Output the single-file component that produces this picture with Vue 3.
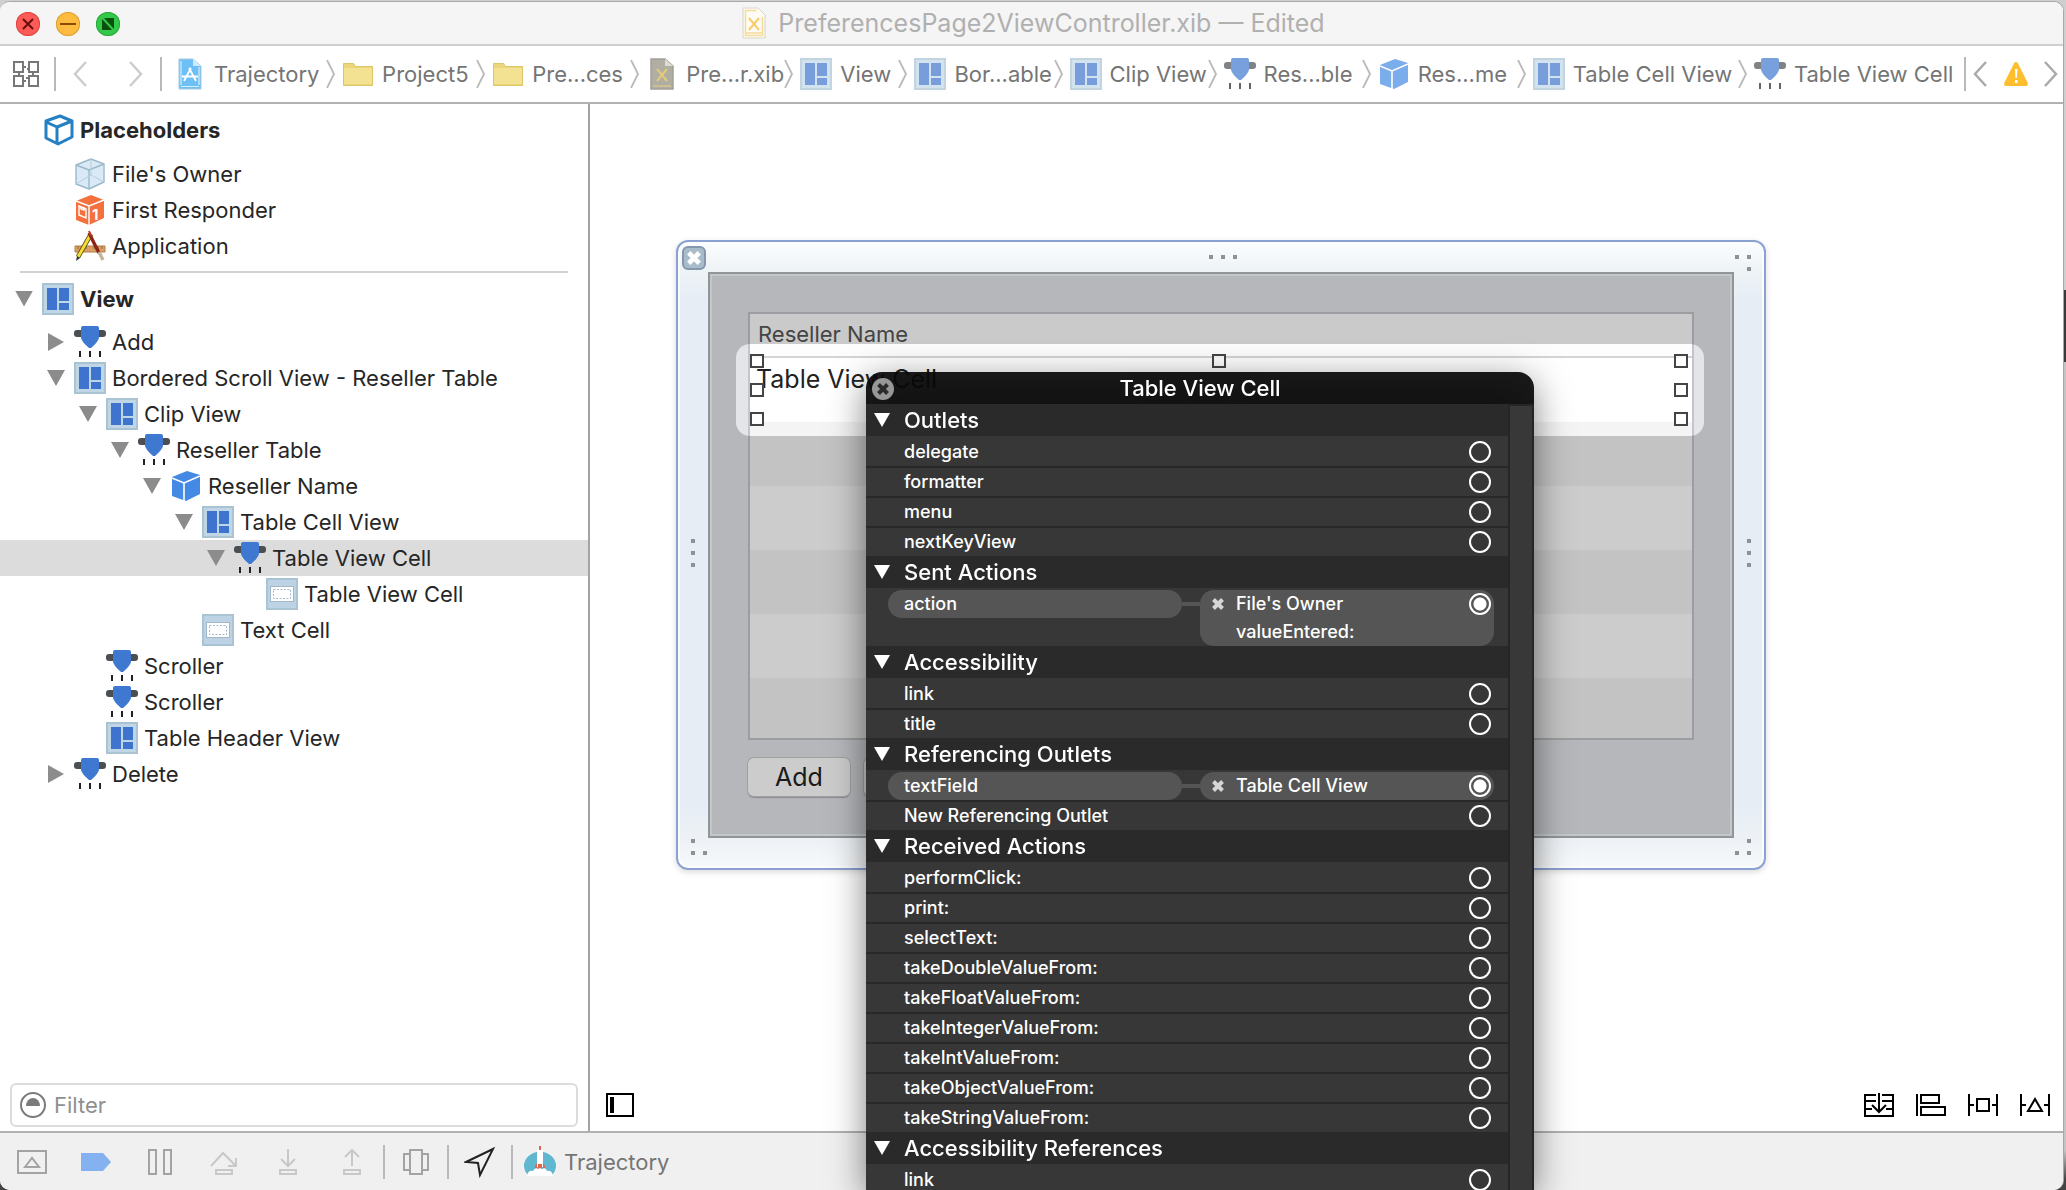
<script setup>
import { ref } from 'vue'

const crumbs = [
  { icon: 'project', label: 'Trajectory' },
  { icon: 'folder', label: 'Project5' },
  { icon: 'folder', label: 'Pre...ces' },
  { icon: 'xib-dim', label: 'Pre...r.xib' },
  { icon: 'view', label: 'View' },
  { icon: 'view', label: 'Bor...able' },
  { icon: 'view', label: 'Clip View' },
  { icon: 'control', label: 'Res...ble' },
  { icon: 'cube', label: 'Res...me' },
  { icon: 'view', label: 'Table Cell View' },
  { icon: 'control', label: 'Table View Cell' },
]

const placeholders = [
  { icon: 'owner', label: "File's Owner" },
  { icon: 'responder', label: 'First Responder' },
  { icon: 'app', label: 'Application' },
]

const tree = [
  { level: 1, icon: 'control', label: 'Add', state: 'closed' },
  { level: 1, icon: 'view', label: 'Bordered Scroll View - Reseller Table', state: 'open' },
  { level: 2, icon: 'view', label: 'Clip View', state: 'open' },
  { level: 3, icon: 'control', label: 'Reseller Table', state: 'open' },
  { level: 4, icon: 'cube', label: 'Reseller Name', state: 'open' },
  { level: 5, icon: 'view', label: 'Table Cell View', state: 'open' },
  { level: 6, icon: 'control', label: 'Table View Cell', state: 'open' },
  { level: 7, icon: 'cell', label: 'Table View Cell' },
  { level: 5, icon: 'cell', label: 'Text Cell' },
  { level: 2, icon: 'control', label: 'Scroller' },
  { level: 2, icon: 'control', label: 'Scroller' },
  { level: 2, icon: 'view', label: 'Table Header View' },
  { level: 1, icon: 'control', label: 'Delete', state: 'closed' },
]
const selected = ref(6)
const filter = ref('')

const sections = [
  { title: 'Outlets', rows: [{ name: 'delegate' }, { name: 'formatter' }, { name: 'menu' }, { name: 'nextKeyView' }] },
  { title: 'Sent Actions', rows: [{ name: 'action', target: ["File's Owner", 'valueEntered:'] }] },
  { title: 'Accessibility', rows: [{ name: 'link' }, { name: 'title' }] },
  { title: 'Referencing Outlets', rows: [{ name: 'textField', target: ['Table Cell View'] }, { name: 'New Referencing Outlet' }] },
  {
    title: 'Received Actions',
    rows: [
      { name: 'performClick:' }, { name: 'print:' }, { name: 'selectText:' },
      { name: 'takeDoubleValueFrom:' }, { name: 'takeFloatValueFrom:' }, { name: 'takeIntegerValueFrom:' },
      { name: 'takeIntValueFrom:' }, { name: 'takeObjectValueFrom:' }, { name: 'takeStringValueFrom:' },
    ],
  },
  { title: 'Accessibility References', rows: [{ name: 'link' }] },
]

const debugTools = [
  { icon: 'd-toggle', label: 'Hide debug area' },
  { icon: 'd-break', label: 'Breakpoints' },
  { icon: 'd-pause', label: 'Pause' },
  { icon: 'd-over', label: 'Step over' },
  { icon: 'd-into', label: 'Step into' },
  { icon: 'd-out', label: 'Step out' },
]
const layoutTools = [
  { icon: 'l-embed', label: 'Embed in stack' },
  { icon: 'l-align', label: 'Align' },
  { icon: 'l-pin', label: 'Pin' },
  { icon: 'l-resolve', label: 'Resolve layout issues' },
]
</script>

<template>
  <svg class="defs" aria-hidden="true">
    <symbol id="i-view" viewBox="0 0 32 32">
      <rect x="1" y="1" width="30" height="30" fill="#bfd6e7" stroke="#a9c3d3" stroke-width="2" />
      <path fill="#3e74cd" d="M5 5h10v22H5zM17 5h10v13H17zM17 20h10v7H17z" />
    </symbol>
    <symbol id="i-control" viewBox="0 0 32 32">
      <rect y="4" width="32" height="7" rx="3" fill="#4b4f54" />
      <path fill="#3e78d0" d="M9 0h14q2 0 2 2v10q-1 4-8 10h-2q-7-6-8-10V2q0-2 2-2z" />
      <path fill="#222" d="M5 25h2v6H5zM15 25h2v6h-2zM25 25h2v6h-2z" />
    </symbol>
    <symbol id="i-cube" viewBox="0 0 32 32">
      <path fill="#4489e4" d="M17 1l13 4v19l-14 7L2 26V7z" />
      <path fill="none" stroke="#fff" stroke-width="1.6" d="M2 8l12 5 16-7M14 13v18" />
    </symbol>
    <symbol id="i-cube-line" viewBox="0 0 32 32">
      <path fill="#fff" stroke="#2580c3" stroke-width="3" stroke-linejoin="round" d="M18 2l12 5v16l-14 7L4 24V7zM4 8l11 5 15-6M15 13v17" />
    </symbol>
    <symbol id="i-owner" viewBox="0 0 32 32">
      <path fill="#d9e9f5" stroke="#9ab9c9" stroke-width="1.4" stroke-linejoin="round" d="M17 1l13 5v18l-15 7L2 26V7z" />
      <path fill="none" stroke="#9ab9c9" stroke-width="1.4" d="M2 7l13 5 15-6M15 12v19" />
      <path fill="none" stroke="#b6cfdd" d="M17 1v16l13 7M17 17L2 26" />
    </symbol>
    <symbol id="i-responder" viewBox="0 0 32 32">
      <path fill="#f4703c" d="M17 1l13 5v18l-15 7L2 26V7z" />
      <path fill="none" stroke="#fff" stroke-width="1.4" d="M2 7l13 5 15-6M15 12v19M5 12l7 3v9l-7-3zM7 12v3l3 1v-3" />
      <text x="18" y="26" fill="#fff" font-size="15" font-weight="700" font-family="Inter, sans-serif">1</text>
    </symbol>
    <symbol id="i-app" viewBox="0 0 32 32">
      <path fill="#d9a066" stroke="#b57f48" d="M1 16h30v6H1z" />
      <path stroke="#9a6a38" d="M4 16v3M8 16v3M12 16v3M20 16v3M24 16v3M28 16v3" />
      <path stroke="#5b4a10" stroke-width="4.6" d="M17 4L4 27" />
      <path stroke="#f2dd3a" stroke-width="3" d="M17 4L4 27" />
      <path fill="#333" d="M2 31l1-5 3 2z" />
      <path stroke="#8c2517" stroke-width="3.4" d="M15 3l10 20" />
      <path stroke="#c9b49b" stroke-width="3.4" d="M25 22l4 8" />
      <path stroke="#c0392b" stroke-width="2" d="M15 1l2 5" />
    </symbol>
    <symbol id="i-cell" viewBox="0 0 32 32">
      <rect x="1" y="1" width="30" height="30" fill="#bdd2e5" stroke="#a9c3d3" stroke-width="2" />
      <rect x="4.5" y="8.5" width="23" height="15" fill="#fff" stroke="#9fb9c9" />
      <rect x="7.5" y="11.5" width="17" height="9" fill="none" stroke="#a5b7c2" stroke-dasharray="2 1.5" />
    </symbol>
    <symbol id="i-project" viewBox="0 0 32 32">
      <path fill="#6cc0f5" stroke="#a9c9dd" d="M5 1h14l8 7v23H5z" />
      <path fill="#cfeaff" d="M19 1v7h8z" />
      <path fill="none" stroke="#d6efff" stroke-width="1.2" d="M7 28.5h18M7 3v24M25 9v18" />
      <path fill="none" stroke="#fff" stroke-width="1.8" d="M17 10l-7 13M15 10l7 13M8 18.5h16" />
    </symbol>
    <symbol id="i-folder" viewBox="0 0 32 32">
      <path fill="#ecd67c" stroke="#dcc568" d="M1.5 5.5h10l2 3h17v19h-29z" />
      <path fill="#f3e292" d="M2 10h28v16H2z" />
    </symbol>
    <symbol id="i-xib-dim" viewBox="0 0 32 32">
      <path fill="#8f8b7c" stroke="#7d7a6c" stroke-width="1.5" d="M5 1h14l8 7v23H5z" />
      <path fill="#d0cec4" d="M19 1v7h8z" />
      <path fill="none" stroke="#d3b75f" stroke-width="1.2" d="M7 28h18" />
      <path fill="none" stroke="#d8b545" stroke-width="2" d="M11 11l10 12M21 11L11 23" />
    </symbol>
    <symbol id="i-xib" viewBox="0 0 32 32">
      <path fill="#fdfbf4" stroke="#d9d4c4" d="M5 1h15l7 7v23H5z" />
      <path fill="none" stroke="#f5dc9a" stroke-width="1.5" d="M7.5 3.5h11M7.5 3v25.5h17V10M7 26h18" />
      <path fill="none" stroke="#f7cd6a" stroke-width="2" d="M11 11l10 12M21 11L11 23" />
    </symbol>
    <symbol id="i-chev-r" viewBox="0 0 16 28"><path fill="none" stroke="currentColor" stroke-width="2.5" d="M2 2l11 12L2 26" /></symbol>
    <symbol id="i-chev-l" viewBox="0 0 16 28"><path fill="none" stroke="currentColor" stroke-width="2.5" d="M14 2L3 14l11 12" /></symbol>
    <symbol id="i-sep" viewBox="0 0 10 28"><path fill="none" stroke="#b9b9b9" stroke-width="1.8" d="M1 0l7 14-7 14" /></symbol>
    <symbol id="i-grid" viewBox="0 0 28 28">
      <path fill="none" stroke="#777" stroke-width="2" d="M2 2h9v10H2zM17 2h9v10h-9zM2 16h9v10H2zM17 16h9v10h-9zM11 7h3M15 9h2M11 21h3M14 18h3M7 12v4M21 12v4" />
    </symbol>
    <symbol id="i-warn" viewBox="0 0 28 26">
      <path fill="#fdbf2d" stroke="#fdbf2d" stroke-width="4" stroke-linejoin="round" d="M14 3l10 20H4z" />
      <path fill="#fff" d="M13 8h2.5l-.5 9h-1.5zM13 19h2.5v3H13z" />
    </symbol>
    <symbol id="i-x" viewBox="0 0 12 12"><path stroke="currentColor" stroke-width="4" d="M1.5 1.5l9 9M10.5 1.5l-9 9" /></symbol>
    <symbol id="i-filter" viewBox="0 0 26 26">
      <circle cx="13" cy="13" r="12" fill="none" stroke="#7b7b7b" stroke-width="2" />
      <path fill="#7b7b7b" d="M6 14a7 8 0 0 1 14 0z" />
    </symbol>
    <symbol id="i-outline" viewBox="0 0 28 24"><path fill="none" stroke="#000" stroke-width="2" d="M1 1h26v22H1z" /><path d="M4 4h4v16H4z" /></symbol>

    <symbol id="i-d-toggle" viewBox="0 0 32 32"><path fill="none" stroke="#a3a3a3" stroke-width="2" d="M2 5h28v22H2zM9 21l7-9 7 9z" /></symbol>
    <symbol id="i-d-break" viewBox="0 0 32 32"><path fill="#84b1f0" d="M1 7h22l8 9-8 9H1z" /></symbol>
    <symbol id="i-d-pause" viewBox="0 0 32 32"><path fill="none" stroke="#a3a3a3" stroke-width="2" d="M5 4h7v24H5zM20 4h7v24h-7z" /></symbol>
    <symbol id="i-d-over" viewBox="0 0 32 32"><path fill="none" stroke="#c8c8c8" stroke-width="2" d="M3 20L15 7l13 13M28 12v8h-8M8 24h16v4H8z" /></symbol>
    <symbol id="i-d-into" viewBox="0 0 32 32"><path fill="none" stroke="#c8c8c8" stroke-width="2" d="M16 3v16M9 13l7 7 7-7M8 24h16v4H8z" /></symbol>
    <symbol id="i-d-out" viewBox="0 0 32 32"><path fill="none" stroke="#c8c8c8" stroke-width="2" d="M16 20V4M9 11l7-7 7 7M8 24h16v4H8z" /></symbol>
    <symbol id="i-d-views" viewBox="0 0 32 32"><path fill="none" stroke="#a3a3a3" stroke-width="2" d="M10 4h12v24H10zM10 8H4v16h6M22 8h6v16h-6" /></symbol>
    <symbol id="i-d-locate" viewBox="0 0 32 32"><path fill="none" stroke="#222" stroke-width="2" d="M29 3L2 16l12 1 2 12z" /></symbol>
    <symbol id="i-rocket" viewBox="0 0 32 32">
      <path fill="#5fb7d0" d="M4 29a16 14 0 1 1 24 0z" />
      <path fill="#fff" d="M13 5q3-6 6 0v16h-6z" />
      <path fill="#e2654d" d="M15 0h2v4h-2zM11 20l2-3v5h-2zM21 20l-2-3v5h2zM14 18h4v5h-4z" />
      <path fill="#fff" d="M3 30q1-6 6-5 2-4 5-2l2-1 2 1q4-2 5 2 5-1 6 5z" />
    </symbol>
    <symbol id="i-l-embed" viewBox="0 0 30 24"><path fill="none" stroke="#000" stroke-width="2" d="M12 2H1v21h28V2H18M1 8h11M18 8h11M1 16h7M22 16h7M15 0v18M8 12l7 7 7-7" /></symbol>
    <symbol id="i-l-align" viewBox="0 0 30 24"><path fill="none" stroke="#000" stroke-width="2" d="M1 1v22M5 2h18v8H5zM5 14h24v8H5z" /></symbol>
    <symbol id="i-l-pin" viewBox="0 0 30 24"><path fill="none" stroke="#000" stroke-width="2" d="M1 1v22M29 1v22M9 6h12v12H9zM1 12h5M24 12h5" /></symbol>
    <symbol id="i-l-resolve" viewBox="0 0 30 24"><path fill="none" stroke="#000" stroke-width="2" d="M1 1v22M29 1v22M8 18l7-12 7 12zM1 12h5M24 12h5" /></symbol>
  </svg>

  <div class="desktop">
    <div class="window">
      <header class="titlebar">
        <div class="lights">
          <button class="light red" aria-label="Close"><svg viewBox="0 0 24 24"><path stroke="#6b0d0a" stroke-width="2" d="M7 7l10 10M17 7L7 17" /></svg></button>
          <button class="light yellow" aria-label="Minimise"><svg viewBox="0 0 24 24"><path stroke="#8a4b05" stroke-width="2" d="M4 12h16" /></svg></button>
          <button class="light green" aria-label="Zoom"><svg viewBox="0 0 24 24"><path fill="#08500c" d="M8 6h10v11zM6 7v11h10z" /></svg></button>
        </div>
        <h1 class="title"><svg class="ico"><use href="#i-xib" /></svg>PreferencesPage2ViewController.xib — Edited</h1>
      </header>

      <nav class="jumpbar" aria-label="Jump bar">
        <button class="plain" aria-label="Related items"><svg class="grid-ico"><use href="#i-grid" /></svg></button>
        <span class="rule"></span>
        <div class="history">
          <button class="plain" aria-label="Back"><svg class="chev"><use href="#i-chev-l" /></svg></button>
          <button class="plain" aria-label="Forward"><svg class="chev"><use href="#i-chev-r" /></svg></button>
        </div>
        <span class="rule"></span>
        <div class="crumbs">
          <button v-for="(c, i) in crumbs" :key="i" class="crumb">
            <svg class="ico"><use :href="'#i-' + c.icon" /></svg>
            <span class="crumb-label">{{ c.label }}</span>
            <svg v-if="i < crumbs.length - 1" class="sep"><use href="#i-sep" /></svg>
          </button>
        </div>
        <span class="rule"></span>
        <div class="issues">
          <button class="plain" aria-label="Previous issue"><svg class="chev"><use href="#i-chev-l" /></svg></button>
          <button class="plain" aria-label="Issues"><svg class="warn"><use href="#i-warn" /></svg></button>
          <button class="plain" aria-label="Next issue"><svg class="chev"><use href="#i-chev-r" /></svg></button>
        </div>
      </nav>

      <div class="main">
        <aside class="outline">
          <h2 class="row head"><span class="tri"></span><svg class="ico"><use href="#i-cube-line" /></svg>Placeholders</h2>
          <ul>
            <li v-for="p in placeholders" :key="p.label" class="row level1">
              <span class="tri"></span><svg class="ico"><use :href="'#i-' + p.icon" /></svg>{{ p.label }}
            </li>
          </ul>
          <hr>
          <h2 class="row head">
            <button class="tri" aria-label="Collapse View"><span class="arrow down"></span></button>
            <svg class="ico"><use href="#i-view" /></svg>View
          </h2>
          <ul class="tree">
            <li
              v-for="(n, i) in tree"
              :key="i"
              :class="['row', 'level' + n.level, { selected: i === selected }]"
              @click="selected = i"
            >
              <button v-if="n.state" class="tri" :aria-label="'Toggle ' + n.label">
                <span :class="['arrow', n.state === 'open' ? 'down' : 'right']"></span>
              </button>
              <span v-else class="tri"></span>
              <svg class="ico"><use :href="'#i-' + n.icon" /></svg>{{ n.label }}
            </li>
          </ul>
          <label class="filter">
            <svg class="filter-ico" aria-hidden="true"><use href="#i-filter" /></svg>
            <input v-model="filter" type="text" placeholder="Filter" aria-label="Filter">
          </label>
        </aside>

        <section class="canvas">
          <div class="frame">
            <button class="frame-close" aria-label="Close view"><svg><use href="#i-x" /></svg></button>
            <svg class="dots dots-t" viewBox="0 0 28 4"><path d="M0 0h4v4H0zM12 0h4v4h-4zM24 0h4v4h-4z" /></svg>
            <svg class="dots dots-l" viewBox="0 0 4 28"><path d="M0 0h4v4H0zM0 12h4v4H0zM0 24h4v4H0z" /></svg>
            <svg class="dots dots-r" viewBox="0 0 4 28"><path d="M0 0h4v4H0zM0 12h4v4H0zM0 24h4v4H0z" /></svg>
            <svg class="dots dots-tr" viewBox="0 0 16 16"><path d="M0 0h4v4H0zM12 0h4v4h-4zM12 12h4v4h-4z" /></svg>
            <svg class="dots dots-br" viewBox="0 0 16 16"><path d="M12 0h4v4h-4zM0 12h4v4H0zM12 12h4v4h-4z" /></svg>
            <svg class="dots dots-bl" viewBox="0 0 16 16"><path d="M0 0h4v4H0zM0 12h4v4H0zM12 12h4v4h-4z" /></svg>
            <div class="view">
              <div class="view-body">
                <table class="grid">
                  <thead><tr><th>Reseller Name</th></tr></thead>
                  <tbody>
                    <tr><td>Table View Cell</td></tr>
                    <tr v-for="n in 5" :key="n"><td></td></tr>
                  </tbody>
                </table>
                <div class="buttons">
                  <button class="push">Add</button>
                  <button class="push" aria-label="Delete"></button>
                </div>
              </div>
              <div class="spotlight">
                <i v-for="n in 9" :key="n" :class="{ none: n === 5 }"></i>
              </div>
            </div>
          </div>

          <footer class="canvas-tools">
            <button class="plain" aria-label="Hide outline"><svg class="outline-ico"><use href="#i-outline" /></svg></button>
            <div class="layout-tools">
              <button v-for="t in layoutTools" :key="t.icon" class="plain" :aria-label="t.label">
                <svg><use :href="'#i-' + t.icon" /></svg>
              </button>
            </div>
          </footer>
        </section>
      </div>

      <footer class="debugbar">
        <div class="debug-tools">
          <button v-for="t in debugTools" :key="t.icon" class="plain" :aria-label="t.label">
            <svg class="ico"><use :href="'#i-' + t.icon" /></svg>
          </button>
        </div>
        <span class="rule"></span>
        <button class="plain" aria-label="View hierarchy"><svg class="ico"><use href="#i-d-views" /></svg></button>
        <span class="rule"></span>
        <button class="plain" aria-label="Simulate location"><svg class="ico"><use href="#i-d-locate" /></svg></button>
        <span class="rule"></span>
        <button class="plain process"><svg class="ico"><use href="#i-rocket" /></svg>Trajectory</button>
      </footer>
    </div>

    <section class="hud" aria-label="Connections">
      <header class="hud-title">
        <button class="hud-close" aria-label="Close connections"><svg><use href="#i-x" /></svg></button>
        <h2>Table View Cell</h2>
      </header>
      <div class="hud-scroll">
        <div class="hud-list">
          <div v-for="s in sections" :key="s.title">
            <h3><button class="plain"><span class="arrow white"></span>{{ s.title }}</button></h3>
            <div v-for="r in s.rows" :key="r.name" :class="['conn', { linked: r.target }]">
              <span class="conn-name">{{ r.name }}</span>
              <template v-if="r.target">
                <span class="wire"></span>
                <div class="target">
                  <button class="plain cut" aria-label="Remove connection"><svg><use href="#i-x" /></svg></button>
                  <div><div v-for="line in r.target" :key="line" class="target-line">{{ line }}</div></div>
                </div>
              </template>
              <button :class="['port', { on: r.target }]" :aria-label="'Connect ' + r.name"></button>
            </div>
          </div>
        </div>
        <div class="hud-track"></div>
      </div>
    </section>
  </div>
</template>

<style>
body {
  background: #cfcfcf;
}
</style>

<style scoped>
.defs { display: none; }
* { box-sizing: border-box; }
button {
  font: inherit;
  color: inherit;
  background: none;
  border: 0;
  padding: 0;
  margin: 0;
}
svg { display: block; flex: none; }
svg.defs { display: none; }
h1, h2, h3, ul { margin: 0; padding: 0; list-style: none; font: inherit; }
.plain { display: flex; align-items: center; }

.desktop {
  position: relative;
  height: 100vh;
  overflow: hidden;
  padding: 1px 2px 0 0;
  background: linear-gradient(#cfcfcf 0 290px, #3a3a3a 290px 362px, #c4c4c4 362px 1150px, #444 1180px);
  font-family: Inter, "Liberation Sans", sans-serif;
  font-size: 22px;
  color: #262626;
}
.window {
  display: flex;
  flex-direction: column;
  height: 100%;
  overflow: hidden;
  background: #fff;
  border-top: 1px solid #a8a8a8;
  border-right: 1px solid #a8a8a8;
  border-radius: 10px;
}
.ico { width: 32px; height: 32px; }
.rule { flex: none; width: 2px; height: 34px; background: #b9b9b9; }

.titlebar {
  position: relative;
  display: flex;
  align-items: center;
  justify-content: center;
  flex: none;
  height: 44px;
  background: #f5f5f5;
  border-bottom: 2px solid #cfcfcf;
}
.lights { position: absolute; left: 16px; top: 10px; display: flex; gap: 16px; }
.light { width: 24px; height: 24px; border-radius: 50%; }
.red { background: #fc5b57; box-shadow: inset 0 0 0 1px #df4744; }
.yellow { background: #fdbc40; box-shadow: inset 0 0 0 1px #de9f34; }
.green { background: #34c84a; box-shadow: inset 0 0 0 1px #27aa35; }
.title { display: flex; align-items: center; gap: 8px; font-size: 25px; color: #b0b0b0; white-space: nowrap; }

.jumpbar {
  display: flex;
  align-items: center;
  flex: none;
  height: 58px;
  padding-left: 12px;
  border-bottom: 2px solid #b1b1b1;
  color: #757575;
}
.grid-ico { width: 28px; height: 28px; margin-right: 14px; }
.chev { width: 16px; height: 28px; }
.history { display: flex; justify-content: space-between; flex: none; width: 104px; padding: 0 16px; color: #cdcdcd; }
.crumbs {
  display: grid;
  flex: 1;
  min-width: 0;
  margin-left: 12px;
  grid-template-columns: 168fr 150fr 154fr 154fr 114fr 155fr 154fr 154fr 155fr 221fr 210fr;
}
.crumb { display: flex; align-items: center; min-width: 0; text-align: left; }
.crumb .ico { opacity: 0.7; margin-right: 8px; }
.crumb .ico:has([href="#i-project"]), .crumb .ico:has([href="#i-folder"]) { opacity: 1; }
.crumb-label { flex: 1; white-space: nowrap; min-width: 0; }
.sep { width: 10px; height: 28px; margin-right: 6px; }
.issues { display: flex; align-items: center; justify-content: space-between; flex: none; width: 97px; padding: 0 4px 0 6px; color: #aaa; }
.warn { width: 28px; height: 26px; }

.main { display: flex; flex: 1; min-height: 0; }
.outline {
  display: flex;
  flex-direction: column;
  flex: none;
  width: 590px;
  border-right: 2px solid #a3a3a3;
}
.row { display: flex; align-items: center; height: 36px; padding-left: 8px; white-space: nowrap; }
.row .ico { margin: 0 6px 0 2px; }
.head { height: 52px; font-weight: 700; }
hr { width: auto; height: 2px; margin: 7px 20px 0; border: 0; background: #d2d2d2; flex: none; }
hr + .head { height: 51px; }
.level1 { padding-left: 40px; }
.level2 { padding-left: 72px; }
.level3 { padding-left: 104px; }
.level4 { padding-left: 136px; }
.level5 { padding-left: 168px; }
.level6 { padding-left: 200px; }
.level7 { padding-left: 232px; }
.selected { background: #dcdcdc; }
.tree { flex: 1; }
.tri { display: flex; align-items: center; justify-content: center; flex: none; width: 32px; height: 32px; }
.arrow { flex: none; background: #8c8c8c; }
.down { width: 18px; height: 16px; clip-path: polygon(0 0, 100% 0, 50% 100%); }
.right { width: 16px; height: 18px; clip-path: polygon(0 0, 100% 50%, 0 100%); }
.white { width: 16px; height: 14px; background: #fff; clip-path: polygon(0 0, 100% 0, 50% 100%); }
.filter {
  display: flex;
  align-items: center;
  height: 44px;
  margin: 0 10px 4px;
  padding-left: 8px;
  border: 2px solid #dcdcdc;
  border-radius: 6px;
}
.filter-ico { width: 26px; height: 26px; margin-right: 8px; }
.filter input { flex: 1; min-width: 0; border: 0; outline: 0; padding: 0; background: none; font: inherit; }
.filter input::placeholder { color: #8f8f8f; opacity: 1; }

.canvas { display: flex; flex-direction: column; justify-content: space-between; flex: 1; min-width: 0; padding-top: 136px; }
.frame {
  position: relative;
  width: 1090px;
  margin-left: 86px;
  padding: 30px;
  border: 2px solid #8ba1d1;
  border-radius: 12px;
  background: linear-gradient(#fbfdfe 0, #eef3f6 28px, #e6edf5 60px, #e6edf5 560px, #eef2f6 600px, #f7f9fb);
  box-shadow: inset 0 0 0 2px #fafcfe, 0 2px 6px rgba(0, 0, 0, 0.15);
}
.frame-close {
  position: absolute;
  left: 4px;
  top: 4px;
  display: grid;
  place-items: center;
  width: 24px;
  height: 24px;
  border: 2px solid #8497ab;
  border-radius: 6px;
  background: #a9bccc;
  color: #fff;
}
.frame-close svg { width: 14px; height: 14px; }
.dots { position: absolute; fill: #8d9296; }
.dots-t { width: 28px; height: 4px; left: 531px; top: 13px; }
.dots-l, .dots-r { width: 4px; height: 28px; top: 297px; }
.dots-l { left: 13px; }
.dots-r { right: 13px; }
.dots-tr, .dots-br, .dots-bl { width: 16px; height: 16px; }
.dots-tr { right: 13px; top: 13px; }
.dots-br { right: 13px; bottom: 13px; }
.dots-bl { left: 13px; bottom: 13px; }
.view { position: relative; overflow: hidden; border: 2px solid #919597; }
.view-body { padding: 36px; border: 2px solid #f6f9fb; background: #e3e5e9; }
.grid {
  width: 946px;
  border: 2px solid #c3c5c8;
  border-spacing: 0;
  background: #fff;
  text-align: left;
}
.grid th { height: 44px; padding: 0 8px 2px; border-bottom: 2px solid #d4d4d4; background: #fdfdfd; font-weight: 400; color: #555; }
.grid td { height: 64px; padding: 0 6px 22px; font-size: 25px; color: #222; }
.grid tbody tr:nth-child(even) { background: #f4f4f4; }
.grid tbody tr:last-child td { height: 60px; }
.buttons { display: flex; gap: 14px; margin: 18px 0 2px; }
.push {
  width: 102px;
  height: 38px;
  border-radius: 6px;
  background: #fff;
  box-shadow: 0 0 0 1px #c9c9cb, 0 2px 1px #b0b0b4;
  font-size: 25px;
  color: #222;
}
.spotlight {
  position: absolute;
  left: 26px;
  right: 28px;
  top: 70px;
  display: grid;
  grid-template-columns: auto auto auto;
  justify-content: space-between;
  align-content: space-between;
  height: 92px;
  padding: 10px 16px 10px 14px;
  border-radius: 14px;
  box-shadow: 0 0 0 1200px rgba(0, 0, 0, 0.2);
}
.spotlight i { width: 14px; height: 14px; border: 2px solid #444; background: rgba(255, 255, 255, 0.8); }
.spotlight .none { visibility: hidden; }

.canvas-tools { display: flex; align-items: center; justify-content: space-between; height: 52px; padding: 0 13px 0 16px; }
.outline-ico { width: 28px; height: 24px; }
.layout-tools { display: flex; gap: 22px; }
.layout-tools svg { width: 30px; height: 24px; }

.debugbar {
  display: flex;
  align-items: center;
  flex: none;
  height: 59px;
  padding-left: 16px;
  border-top: 2px solid #b1b1b1;
  background: #f0f0f0;
  color: #757575;
  gap: 15px;
}
.debug-tools { display: flex; gap: 32px; }
.process { gap: 8px; margin-left: -4px; }

.hud {
  position: absolute;
  left: 866px;
  top: 372px;
  bottom: 0;
  display: flex;
  flex-direction: column;
  width: 668px;
  overflow: hidden;
  border-radius: 16px 16px 0 0;
  color: #fff;
  font-weight: 500;
  filter: drop-shadow(0 8px 18px rgba(0, 0, 0, 0.5));
}
.hud-title { position: relative; display: flex; align-items: center; justify-content: center; flex: none; height: 32px; background: rgba(9, 9, 9, 0.93); }
.hud-close {
  position: absolute;
  left: 6px;
  top: 6px;
  display: grid;
  place-items: center;
  width: 22px;
  height: 22px;
  border-radius: 50%;
  background: #979797;
  color: #2b2b2b;
}
.hud-close svg { width: 12px; height: 12px; }
.hud-scroll { display: flex; flex: 1; min-height: 0; }
.hud-list { flex: 1; overflow: hidden; background: #292929; }
.hud-track { width: 26px; background: #383838; border: solid #262626; border-width: 2px 2px 0; }
h3 { display: flex; height: 32px; padding-left: 8px; background: #2a2a2a; }
h3 .plain { gap: 14px; }
.conn {
  position: relative;
  display: flex;
  align-items: flex-start;
  min-height: 30px;
  padding: 0 14px 0 22px;
  border-top: 2px solid #282828;
  background: #373737;
  font-size: 18px;
  line-height: 28px;
}
h3 + .conn { border-top-color: #373737; }
.conn-name { flex: 1; padding-left: 16px; border-radius: 14px; }
.linked .conn-name { background: #555; }
.wire { width: 18px; height: 4px; margin-top: 12px; background: #555; }
.target { display: flex; width: 294px; padding-left: 12px; border-radius: 14px; background: #555; }
.target-line { height: 28px; }
.cut { height: 28px; margin-right: 12px; color: #d6d6d6; }
.cut svg { width: 12px; height: 12px; }
.port { position: absolute; right: 17px; top: 3px; width: 22px; height: 22px; border: 2px solid #fff; border-radius: 50%; }
.port.on { background: radial-gradient(circle, #fff 6px, transparent 7px); }
</style>
